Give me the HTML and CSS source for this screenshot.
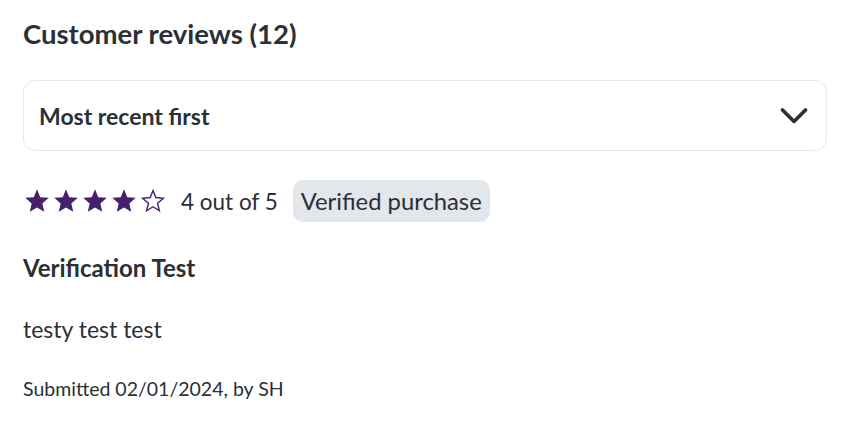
FILE: index.html
```html
<!DOCTYPE html>
<html>
<head>
<meta charset="utf-8">
<link rel="stylesheet" href="styles.css">
</head>
<body>
<section class="reviews">
  <h2 class="title">Customer reviews (12)</h2>
  <div class="select">
    <span class="select-label">Most recent first</span>
    <svg class="chevron" width="28" height="18" viewBox="0 0 28 18"><path d="M2.5 3 L14 14.5 L25.5 3" fill="none" stroke="#2b2f36" stroke-width="3.6" stroke-linecap="round" stroke-linejoin="round"/></svg>
  </div>
  <article class="review">
    <div class="rating-row">
      <div class="stars">
        <svg class="star" viewBox="0 0 24 24"><path d="M12 1.2 L15 8.5 L22.9 9.1 L16.9 14.2 L18.7 22 L12 17.9 L5.3 22 L7.1 14.2 L1.1 9.1 L9 8.5 Z" fill="#47206d"/></svg>
        <svg class="star" viewBox="0 0 24 24"><path d="M12 1.2 L15 8.5 L22.9 9.1 L16.9 14.2 L18.7 22 L12 17.9 L5.3 22 L7.1 14.2 L1.1 9.1 L9 8.5 Z" fill="#47206d"/></svg>
        <svg class="star" viewBox="0 0 24 24"><path d="M12 1.2 L15 8.5 L22.9 9.1 L16.9 14.2 L18.7 22 L12 17.9 L5.3 22 L7.1 14.2 L1.1 9.1 L9 8.5 Z" fill="#47206d"/></svg>
        <svg class="star" viewBox="0 0 24 24"><path d="M12 1.2 L15 8.5 L22.9 9.1 L16.9 14.2 L18.7 22 L12 17.9 L5.3 22 L7.1 14.2 L1.1 9.1 L9 8.5 Z" fill="#47206d"/></svg>
        <svg class="star" viewBox="0 0 24 24"><path d="M12 2.4 L14.6 8.8 L21.6 9.4 L16.2 14 L17.9 21 L12 17.3 L6.1 21 L7.8 14 L2.4 9.4 L9.4 8.8 Z" fill="none" stroke="#47206d" stroke-width="1.3" stroke-linejoin="miter"/></svg>
      </div>
      <span class="score">4 out of 5</span>
      <span class="badge">Verified purchase</span>
    </div>
    <h3 class="review-title">Verification Test</h3>
    <p class="review-body">testy test test</p>
    <p class="review-meta">Submitted 02/01/2024, by SH</p>
  </article>
</section>
</body>
</html>
```

FILE: styles.css
```css
html, body {
  margin: 0;
  padding: 0;
  background: #ffffff;
}
body {
  font-family: "Lato", "Noto Sans", sans-serif;
  color: #2b2f36;
}
.reviews {
  padding: 16px 23px 0 23px;
  display: flex;
  flex-direction: column;
}
.title {
  margin: 0;
  font-size: 27.5px;
  font-weight: 700;
  line-height: 36px;
}
.select {
  margin-top: 28px;
  height: 69px;
  border: 1px solid #e5e7eb;
  border-radius: 12px;
  display: flex;
  align-items: center;
  justify-content: space-between;
  padding: 0 18px 0 15px;
}
.select-label {
  font-size: 23px;
  font-weight: 700;
}
.chevron {
  display: block;
}
.review {
  display: flex;
  flex-direction: column;
}
.rating-row {
  margin-top: 29px;
  display: flex;
  align-items: center;
  height: 42px;
}
.stars {
  display: flex;
  gap: 3px;
  margin-left: 1px;
}
.star {
  width: 26px;
  height: 26px;
  display: block;
}
.score {
  margin-left: 15px;
  font-size: 22.5px;
}
.badge {
  margin-left: 15px;
  background: #e3e6eb;
  border-radius: 10px;
  padding: 0 8px;
  height: 42px;
  display: flex;
  align-items: center;
  font-size: 23.8px;
}
.review-title {
  margin: 31px 0 0 0;
  font-size: 24px;
  font-weight: 700;
  line-height: 30px;
}
.review-body {
  margin: 31px 0 0 0;
  font-size: 23px;
  line-height: 30px;
}
.review-meta {
  margin: 32px 0 0 0;
  font-size: 19.5px;
  line-height: 26px;
}
```
